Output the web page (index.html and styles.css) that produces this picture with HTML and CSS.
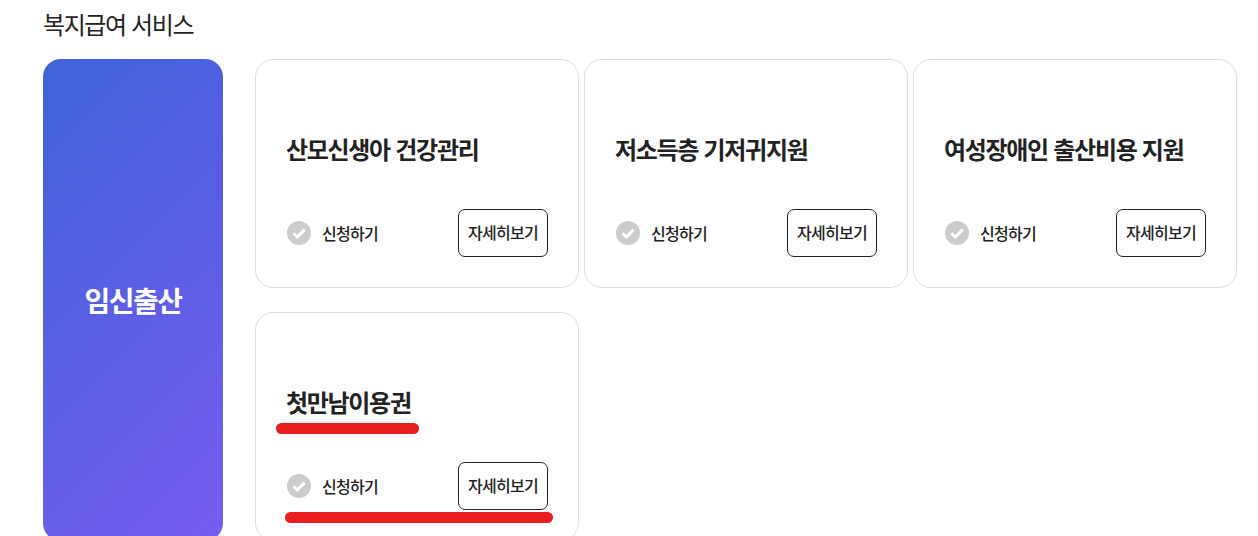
FILE: index.html
```html
<!DOCTYPE html>
<html lang="ko">
<head>
  <meta charset="UTF-8">
  <meta name="viewport" content="width=device-width, initial-scale=1.0">
  <title>복지급여 서비스</title>
  <link rel="stylesheet" href="styles.css">
</head>
<body>
  <h2 class="section-title">복지급여 서비스</h2>
  <div class="service-wrap">
    <div class="side-panel">임신출산</div>
    <div class="card-grid">
      <div class="card">
        <h3 class="card-title">산모신생아 건강관리</h3>
        <div class="card-foot">
          <span class="apply">
            <svg class="check" viewBox="0 0 24 24"><circle cx="12" cy="12" r="12" fill="#ccc"/><path d="M6.4 12.2l3.9 3.8 7.3-7.4" fill="none" stroke="#fff" stroke-width="3"/></svg>
            <span class="apply-label">신청하기</span>
          </span>
          <button class="detail-btn"><span class="detail-label">자세히보기</span></button>
        </div>
      </div>
      <div class="card">
        <h3 class="card-title">저소득층 기저귀지원</h3>
        <div class="card-foot">
          <span class="apply">
            <svg class="check" viewBox="0 0 24 24"><circle cx="12" cy="12" r="12" fill="#ccc"/><path d="M6.4 12.2l3.9 3.8 7.3-7.4" fill="none" stroke="#fff" stroke-width="3"/></svg>
            <span class="apply-label">신청하기</span>
          </span>
          <button class="detail-btn"><span class="detail-label">자세히보기</span></button>
        </div>
      </div>
      <div class="card">
        <h3 class="card-title">여성장애인 출산비용 지원</h3>
        <div class="card-foot">
          <span class="apply">
            <svg class="check" viewBox="0 0 24 24"><circle cx="12" cy="12" r="12" fill="#ccc"/><path d="M6.4 12.2l3.9 3.8 7.3-7.4" fill="none" stroke="#fff" stroke-width="3"/></svg>
            <span class="apply-label">신청하기</span>
          </span>
          <button class="detail-btn"><span class="detail-label">자세히보기</span></button>
        </div>
      </div>
      <div class="card">
        <h3 class="card-title">첫만남이용권</h3>
        <span class="mark mark-title"></span>
        <div class="card-foot">
          <span class="apply">
            <svg class="check" viewBox="0 0 24 24"><circle cx="12" cy="12" r="12" fill="#ccc"/><path d="M6.4 12.2l3.9 3.8 7.3-7.4" fill="none" stroke="#fff" stroke-width="3"/></svg>
            <span class="apply-label">신청하기</span>
          </span>
          <button class="detail-btn"><span class="detail-label">자세히보기</span></button>
        </div>
        <span class="mark mark-foot"></span>
      </div>
    </div>
  </div>
</body>
</html>
```

FILE: styles.css
```css
html, body { height: 536px; overflow: hidden; }
body { margin: 0; padding: 0 21px 0 43px; background: #fff; color: #222; font-family: 'Noto Sans CJK KR', 'Noto Sans', sans-serif; }
.section-title { margin: 0 0 20px; height: 39px; font-size: 24px; line-height: 48px; font-weight: 400; letter-spacing: -1.4px; }
.service-wrap { display: flex; gap: 32px; align-items: stretch; }
.side-panel { width: 180px; flex: none; border-radius: 18px; background: linear-gradient(135deg, #3f62d9 0%, #775cf0 100%); color: #fff; font-size: 28px; font-weight: 700; letter-spacing: -1.5px; display: flex; align-items: center; justify-content: center; }
.card-grid { display: grid; grid-template-columns: repeat(3, 324px); grid-auto-rows: 229px; column-gap: 5px; row-gap: 24px; }
.card { position: relative; box-sizing: border-box; border: 1px solid #ddd; border-radius: 18px; padding: 0 30px; }
.card-title { margin: 71px 0 0; height: 36px; font-size: 24px; line-height: 36px; font-weight: 700; letter-spacing: -1.3px; white-space: nowrap; }
.card-foot { margin-top: 42px; display: flex; align-items: center; justify-content: space-between; }
.apply { display: flex; align-items: center; gap: 11px; margin-left: 1px; font-size: 16px; font-weight: 500; letter-spacing: -0.7px; }
.apply-label { margin-top: -1px; }
.check { width: 24px; height: 24px; }
.detail-btn { box-sizing: border-box; width: 90px; height: 48px; padding: 0; border: 1px solid #222; border-radius: 7px; background: #fff; color: #222; font-family: inherit; font-size: 16px; font-weight: 500; letter-spacing: -0.7px; }
.detail-label { position: relative; top: -1px; }
.mark { position: absolute; height: 11px; background: #e71d1f; border-radius: 6px; }
.mark-title { left: 20px; top: 110px; width: 143px; }
.mark-foot { left: 29px; top: 199px; width: 268px; }
```
